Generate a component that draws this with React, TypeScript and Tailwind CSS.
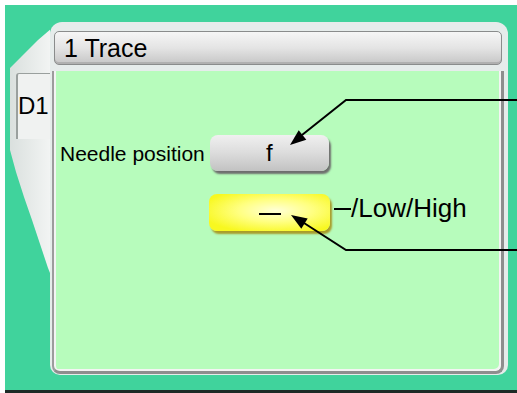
import React from 'react';

// Callout arrows drawn over the screen
function Callouts() {
  return (
    <svg className="absolute inset-0 pointer-events-none" width={517} height={393} viewBox="0 0 517 393">
      <polyline points="517,100 346,100 302,135" fill="none" stroke="#000" strokeWidth={2} />
      <path d="M290 145 L306.3 139.7 L298.7 130.3 Z" fill="#000" />
      <polyline points="517,250 346,250 304,223" fill="none" stroke="#000" strokeWidth={2} />
      <path d="M291 215 L301.3 228.7 L307.7 218.5 Z" fill="#000" />
    </svg>
  );
}

export default function App() {
  const font = { fontFamily: '"Liberation Sans", Arial, sans-serif' };

  return (
    <div className="relative w-[517px] h-[393px] bg-white pt-[5px] pl-[5px] overflow-hidden" style={font}>
      <div className="w-[512px] h-[388px] bg-[#40d39c] border-b-[3px] border-[#1d2b26] flex pt-[17px] pl-[3px]">
        {/* left tab */}
        <div className="w-[42px] h-[353px] relative shrink-0">
          <div className="absolute inset-0 bg-gradient-to-r from-[#d9dfdd] to-[#f2f4f3] [clip-path:polygon(42px_0,44px_6px,30px_18px,14px_34px,2px_46px,2px_128px,8px_150px,16px_175px,24px_198px,32px_222px,40px_246px,44px_256px,44px_0)]" />
          <div className="relative mt-[51px] ml-[8px] w-[34px] h-[66px] border-l-[2px] border-t border-[#9aa09e] rounded-tl-[3px] bg-[#f0f2f1] pt-[20px]">
            <span className="block text-[24px] leading-none text-black">D1</span>
          </div>
        </div>

        {/* main panel */}
        <div className="w-[458px] h-[353px] bg-[#e6eceb] rounded-t-[12px] rounded-b-[10px] pt-[9px] pl-[2px] pr-[4px] flex flex-col">
          <div className="h-[34px] w-[448px] ml-[2px] rounded-[5px] border border-[#8a8c8c] bg-gradient-to-b from-[#f6f6f6] via-[#e4e4e4] to-[#c6c6c6] flex items-center pl-[9px] shadow-[inset_0_-2px_0_#b0b0b0]">
            <span className="text-[25px] leading-none text-black">1 Trace</span>
          </div>
          <div className="mt-[6px] h-[303px] w-[452px] bg-[#b7fcbc] rounded-b-[8px] border-l-[2px] border-b-[3px] border-r-[3px] border-l-[#9c9c9c] border-b-[#8e8e8e] border-r-[#8e8e8e] shadow-[inset_-2px_-2px_0_#f4f4f4,inset_2px_0_0_#f4f4f4] pl-[6px]">
            <div className="flex items-center mt-[64px]">
              <span className="text-[21px] leading-none text-black">Needle position</span>
              <div className="ml-[5px] w-[119px] h-[36px] rounded-[8px] bg-gradient-to-b from-[#f0f0f0] via-[#dcdcdc] to-[#c2c2c2] shadow-[2px_3px_2px_#6e6e6e] flex items-center justify-center">
                <span className="text-[24px] leading-none text-black">f</span>
              </div>
            </div>
            <div className="flex items-center mt-[23px]">
              <div className="ml-[149px] w-[121px] h-[37px] rounded-[8px] bg-[radial-gradient(ellipse_at_55%_45%,#ffffd8_0%,#ffff80_40%,#f8f820_80%)] shadow-[2px_3px_2px_#a89c2a] flex items-center justify-center">
                <span className="block w-[22px] h-[2px] bg-black mt-[3px]" />
              </div>
              <div className="ml-[4px] -mt-[9px] flex items-center">
                <span className="block w-[17px] h-[2px] bg-black mt-[2px]" />
                <span className="text-[26px] leading-none text-black">/Low/High</span>
              </div>
            </div>
          </div>
        </div>
      </div>
      <Callouts />
    </div>
  );
}
